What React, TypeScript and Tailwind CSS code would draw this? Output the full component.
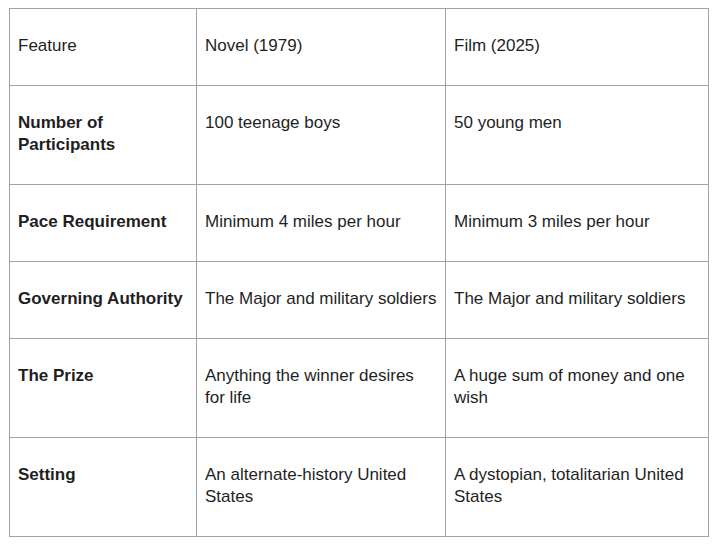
const rows = [
  { feature: "Number of Participants", novel: "100 teenage boys", film: "50 young men" },
  { feature: "Pace Requirement", novel: "Minimum 4 miles per hour", film: "Minimum 3 miles per hour" },
  {
    feature: "Governing Authority",
    novel: "The Major and military soldiers",
    film: "The Major and military soldiers",
  },
  { feature: "The Prize", novel: "Anything the winner desires for life", film: "A huge sum of money and one wish" },
  { feature: "Setting", novel: "An alternate-history United States", film: "A dystopian, totalitarian United States" },
];

const cell = "border border-[#a3a3a3] pl-[8px] pr-[8px] pt-[26px] pb-[28px] align-top";

export default function App() {
  return (
    <div className="min-h-[548px] bg-white pt-[8px] pl-[9px] font-['Liberation_Sans',Arial,sans-serif] text-[17px] leading-[22px] text-[#1f1f1f]">
      <table className="w-[699px] table-fixed border-collapse">
        <colgroup>
          <col className="w-[187px]" />
          <col className="w-[249px]" />
          <col className="w-[263px]" />
        </colgroup>
        <tbody>
          <tr>
            <td className={cell}>Feature</td>
            <td className={cell}>Novel (1979)</td>
            <td className={cell}>Film (2025)</td>
          </tr>
          {rows.map((row) => (
            <tr key={row.feature}>
              <td className={`${cell} font-bold`}>{row.feature}</td>
              <td className={cell}>{row.novel}</td>
              <td className={cell}>{row.film}</td>
            </tr>
          ))}
        </tbody>
      </table>
    </div>
  );
}
